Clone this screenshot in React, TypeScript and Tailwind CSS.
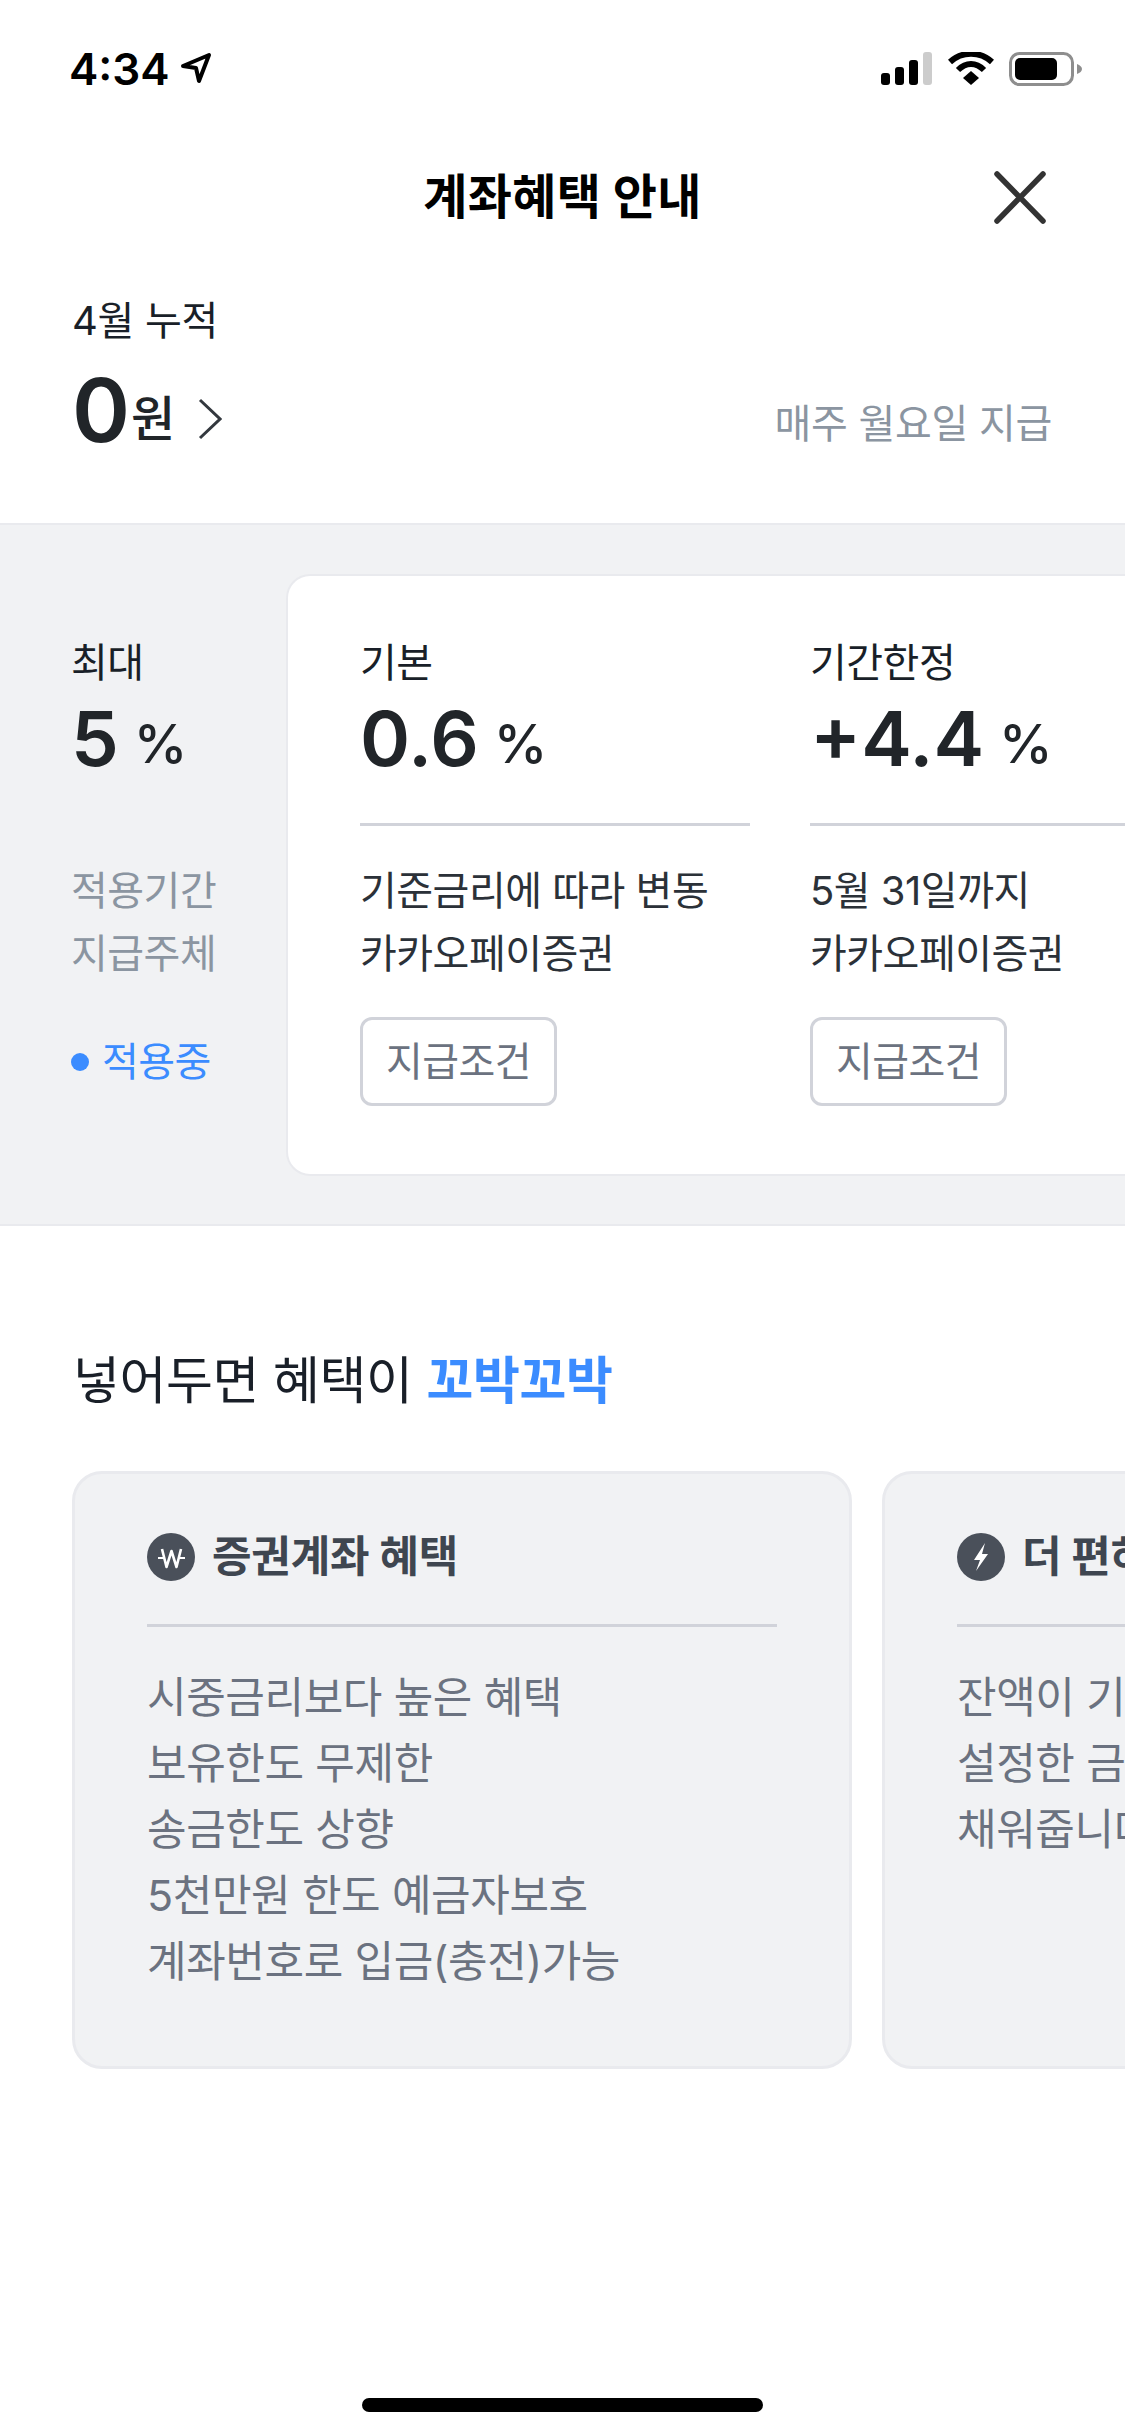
import React from "react";

function Column({ label, value, desc }: { label: string; value: string; desc: string[] }) {
  return (
    <div className="w-[390px] shrink-0">
      <div className="h-[50px] text-[40px] leading-[50px] text-[#191f28] tracking-[-0.5px]">{label}</div>
      <div className="mt-[11px] h-[78px] flex items-center text-[#212529]">
        <span className="text-[76px] leading-[78px] font-semibold">{value}</span>
        <span className="ml-[15px] mt-[12px] text-[54px] leading-[60px] font-medium">%</span>
      </div>
      <div className="mt-[46px] h-[3px] bg-[#d1d3da]" />
      <div className="mt-[33px] text-[40px] leading-[63px] text-[#2b3138] tracking-[-0.5px]">
        {desc.map((d) => (
          <div key={d} className="whitespace-nowrap">{d}</div>
        ))}
      </div>
      <div className="mt-[32px] w-[197px] h-[89px] border-[3px] border-[#d1d3da] rounded-[12px] bg-white flex items-center justify-center text-[40px] text-[#6b7280] tracking-[-0.5px]">
        지급조건
      </div>
    </div>
  );
}

function BenefitCard({ icon, title, lines }: { icon: React.ReactNode; title: string; lines: string[] }) {
  return (
    <div className="w-[780px] h-[598px] shrink-0 rounded-[30px] border-[3px] border-[#e9eaee] bg-[#f1f2f4] px-[72px] pt-[59px]">
      <div className="h-[48px] flex items-center">
        {icon}
        <span className="ml-[17px] -mt-[2px] text-[43px] font-bold text-[#3f4650] tracking-[-0.2px] whitespace-nowrap">{title}</span>
      </div>
      <div className="mt-[43px] h-[3px] bg-[#d1d3da]" />
      <div className="mt-[37px] text-[43px] leading-[66px] text-[#6b7280] tracking-[-0.4px]">
        {lines.map((l) => (
          <div key={l} className="whitespace-nowrap">{l}</div>
        ))}
      </div>
    </div>
  );
}

export default function App() {
  return (
    <div className="w-[1125px] h-[2436px] bg-white overflow-hidden flex flex-col font-['Inter','Noto_Sans_CJK_KR',sans-serif]">
      {/* status bar */}
      <div className="h-[136px] shrink-0 flex justify-between pl-[69px] pr-[43px] pt-[44px]">
        <div className="flex items-start">
          <span className="text-[44px] leading-[50px] font-semibold text-black">4:34</span>
          <svg className="ml-[10px] mt-[8px]" width="32" height="32" viewBox="0 0 32 32">
            <path d="M3 14 L29 3 L19 29 L16 16 Z" fill="none" stroke="#000" strokeWidth="4" strokeLinejoin="round" />
          </svg>
        </div>
        <div className="flex items-start pt-[8px]">
          <svg width="52" height="34" viewBox="0 0 52 34">
            <rect x="0" y="21" width="9" height="12" rx="3" fill="#000" />
            <rect x="14" y="15" width="9" height="18" rx="3" fill="#000" />
            <rect x="28" y="8" width="9" height="25" rx="3" fill="#000" />
            <rect x="42" y="0" width="9" height="33" rx="3" fill="#cccccc" />
          </svg>
          <svg className="ml-[15px]" width="46" height="34" viewBox="0 0 46 34">
            <path d="M2 10 C14 -1 32 -1 44 10" fill="none" stroke="#000" strokeWidth="6" />
            <path d="M10 18 C18 10 28 10 36 18" fill="none" stroke="#000" strokeWidth="6" />
            <path d="M15 26 L23 19 L31 26 L23 33 Z" fill="#000" />
          </svg>
          <svg className="ml-[15px]" width="73" height="34" viewBox="0 0 73 34">
            <rect x="1.5" y="1.5" width="62" height="31" rx="9" fill="none" stroke="#8e8e8e" strokeWidth="3" />
            <rect x="6" y="6" width="42" height="22" rx="5" fill="#000" />
            <path d="M68 12 C71 13 73 15 73 17 C73 19 71 21 68 22 Z" fill="#8e8e8e" />
          </svg>
        </div>
      </div>

      {/* header */}
      <div className="h-[122px] shrink-0 grid grid-cols-[1fr_auto_1fr] items-center">
        <div />
        <div className="text-[48px] font-bold text-black tracking-[0.3px] whitespace-nowrap">계좌혜택 안내</div>
        <div className="justify-self-end pr-[79px] flex">
          <svg width="52" height="53" viewBox="0 0 52 53">
            <path d="M3 3 L49 50 M49 3 L3 50" stroke="#333333" strokeWidth="5.5" strokeLinecap="round" />
          </svg>
        </div>
      </div>

      {/* summary */}
      <div className="h-[265px] shrink-0 pl-[72px] pr-[73px] pt-[38px]">
        <div className="h-[50px] text-[40px] leading-[50px] text-[#191f28] tracking-[-0.3px]">4월 누적</div>
        <div className="mt-[24px] flex items-center justify-between h-[80px]">
          <div className="flex items-center">
            <span className="text-[88px] leading-[80px] font-semibold text-[#212529]">0</span>
            <span className="ml-[1px] mt-[17px] text-[48px] leading-[60px] font-medium text-[#212529]">원</span>
            <svg className="ml-[23px] mt-[17px]" width="24" height="42" viewBox="0 0 24 42">
              <path d="M2 2 L22 21 L2 40" fill="none" stroke="#33383e" strokeWidth="3" />
            </svg>
          </div>
          <div className="mt-[28px] text-[40px] text-[#8b95a1] tracking-[-0.3px] whitespace-nowrap">매주 월요일 지급</div>
        </div>
      </div>

      {/* rates */}
      <div className="h-[703px] shrink-0 bg-[#f1f2f4] border-y-[2px] border-[#e9eaee] flex pt-[49px] overflow-hidden">
        <div className="w-[286px] shrink-0 pl-[71px] pt-[64px]">
          <div className="h-[50px] text-[40px] leading-[50px] text-[#191f28] tracking-[-0.5px]">최대</div>
          <div className="mt-[11px] h-[78px] flex items-center text-[#212529]">
            <span className="text-[76px] leading-[78px] font-semibold">5</span>
            <span className="ml-[15px] mt-[12px] text-[54px] leading-[60px] font-medium">%</span>
          </div>
          <div className="mt-[82px] text-[40px] leading-[63px] text-[#8b95a1] tracking-[-0.5px]">
            <div>적용기간</div>
            <div>지급주체</div>
          </div>
          <div className="mt-[32px] h-[89px] flex items-center">
            <span className="w-[18px] h-[18px] rounded-full bg-[#3b8cff]" />
            <span className="ml-[13px] text-[40px] text-[#3b8cff] tracking-[-0.5px]">적용중</span>
          </div>
        </div>
        <div className="h-[602px] shrink-0 rounded-l-[24px] border-[2px] border-r-0 border-[#e9eaee] bg-white flex gap-[60px] pl-[72px] pt-[62px] pr-[60px]">
          <Column label="기본" value="0.6" desc={["기준금리에 따라 변동", "카카오페이증권"]} />
          <Column label="기간한정" value="+4.4" desc={["5월 31일까지", "카카오페이증권"]} />
        </div>
      </div>

      {/* heading */}
      <div className="mt-[120px] h-[70px] shrink-0 pl-[73px] text-[51px] leading-[70px] text-[#191f28] tracking-[-0.4px] whitespace-nowrap">
        넣어두면 혜택이 <span className="font-bold text-[#3b8cff]">꼬박꼬박</span>
      </div>

      {/* benefit cards */}
      <div className="mt-[55px] shrink-0 flex gap-[30px] pl-[72px] overflow-hidden">
        <BenefitCard
          title="증권계좌 혜택"
          lines={["시중금리보다 높은 혜택", "보유한도 무제한", "송금한도 상향", "5천만원 한도 예금자보호", "계좌번호로 입금(충전)가능"]}
          icon={
            <svg width="48" height="48" viewBox="0 0 48 48" className="shrink-0">
              <circle cx="24" cy="24" r="24" fill="#4a505a" />
              <path d="M15 16 L19.5 34 L24.5 18 L29.5 34 L34 16" fill="none" stroke="#fff" strokeWidth="2.6" strokeLinejoin="round" />
              <path d="M11 25 H17 M32 25 H38" stroke="#fff" strokeWidth="2.2" />
            </svg>
          }
        />
        <BenefitCard
          title="더 편하게"
          lines={["잔액이 기준금액보다 적으면", "설정한 금액만큼 자동으로", "채워줍니다"]}
          icon={
            <svg width="48" height="48" viewBox="0 0 48 48" className="shrink-0">
              <circle cx="24" cy="24" r="24" fill="#4a505a" />
              <path d="M28 10 L17 27 H23 L19 38 L31 21 H25 Z" fill="#fff" />
            </svg>
          }
        />
      </div>

      {/* home indicator */}
      <div className="mt-auto mb-[24px] mx-auto w-[401px] h-[14px] shrink-0 rounded-full bg-black" />
    </div>
  );
}
